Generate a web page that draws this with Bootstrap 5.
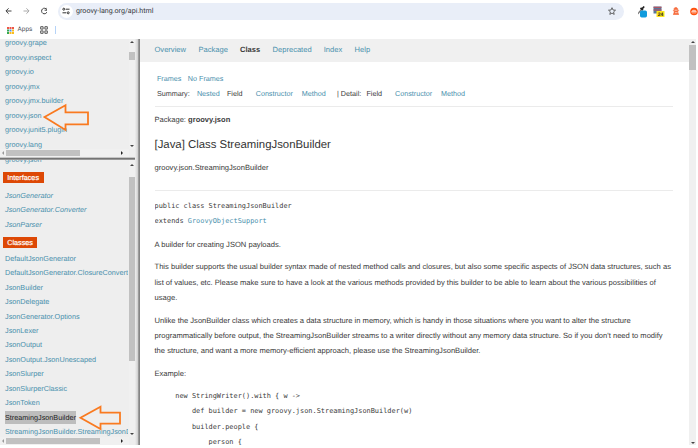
<!DOCTYPE html>
<html lang="en">
<head>
<meta charset="utf-8">
<meta name="viewport" content="width=device-width, initial-scale=1">
<title>StreamingJsonBuilder</title>
<link href="https://cdn.jsdelivr.net/npm/bootstrap@5.3.0/dist/css/bootstrap.min.css" rel="stylesheet">
<style>
body{width:698px;height:448px;font-family:"Liberation Sans",Arial,sans-serif;font-size:7.55px;line-height:15.3px;color:#3a3a3a;text-rendering:geometricPrecision}
a{color:#4a90ad;text-decoration:none}
svg{display:block;flex:none}
.toolbar{height:22px;padding-left:4px}
.omnibox{width:567px;height:17px;margin:0 14px 0 11px;background:#e9eef8;border-radius:9px;padding:0 8px 0 1.5px;font-family:Roboto,sans-serif;font-size:7.12px;color:#34373b}
.site-info{width:13px;height:13px;border-radius:50%;background:#fff;margin-right:3.5px}
.bookmarks{height:17px;padding:0 0 1px 7px;font-family:Roboto,sans-serif;font-size:6.5px;color:#50545a}
.apps-label{margin:0 8px 0 3.5px}
.bm-line{width:1px;height:8px;margin-left:7px;background:#b5d3f8}
.frames{height:406px}
.side{width:135px;background:#eee;font-size:7.26px;line-height:14.5px;white-space:nowrap}
.split{width:5px;background:linear-gradient(90deg,#eee 0,#d8d8d8 45%,#c8c8c8 60%,#858585 75%,#858585)}
.pane-a{height:118px}
.pane-b{height:285px}
.hsplit{height:3px;background:linear-gradient(#eee,#747474 50%,#aaa)}
.view{width:129px;min-height:0;padding-right:1.5px}
.view nav{overflow-x:clip}
.list-a{margin-top:-3px}
.list-b{margin-top:-7.3px}
.list-a a,.list-b a{display:block;padding-left:5px;height:14.5px;line-height:14.5px}
.list-b a{height:14.45px;line-height:14.45px}
.tag{width:max-content;background:#dd4805;color:#fff;height:11px;line-height:11.5px;padding:0 4.5px 0 4.6px;margin-left:2.6px;-webkit-text-stroke:.2px #fff}
.tag-i{margin-top:5.3px;margin-bottom:5.2px}
.tag-c{margin-top:4.9px;margin-bottom:4px}
.list-b a.picked span{background:#bdbdbd;color:#222;display:inline-block;height:13.5px;line-height:13.5px}
.vbar{width:6px;background:#f0f0f0;padding:2px 0}
.hbar{height:8px;background:#f0f0f0;width:129px;padding:0 2px}
.thumb{background:#c1c1c1}
.up,.down{width:0;height:0;border:2px solid transparent}
.up{border-bottom:2.5px solid #444;border-top:0}
.down{border-top:2.5px solid #444;border-bottom:0}
.lt,.rt{width:0;height:0;border:2px solid transparent}
.lt{border-right:2.5px solid #999;border-left:0}
.rt{border-left:2.5px solid #222;border-right:0}
.arrow{position:absolute;z-index:2}
.doc{width:549px}
.menu{height:22.5px;background:#f0f0f0;padding:2px 0 0 14.5px;display:grid;grid-template-columns:44px 41.5px 32.6px 51.1px 30.9px 30px;line-height:17px;white-space:nowrap}
.body-col{padding:0 16px 0 14.5px}
.sub{padding-left:2.4px;font-size:7.2px;white-space:nowrap}
.sub-a{margin-top:9.4px;gap:6.6px}
.sub-b{display:grid;grid-template-columns:40px 30px 28.8px 46px 35.3px 29.5px 28.5px 46px 30px}
.rule{height:1px;background:#ebebeb}
.title{font-size:11.38px;line-height:16px;color:#333}
pre{font-family:"DejaVu Sans Mono",monospace;font-size:6.92px;line-height:15.3px;color:#3a3a3a}
.para{margin:0 0 7.5px;white-space:nowrap;font-size:7.595px}
.mainbar{width:7px;background:#f0f0f0;padding:2px 0 1px}
</style>
<script src="https://cdn.jsdelivr.net/npm/bootstrap@5.3.0/dist/js/bootstrap.bundle.min.js"></script>
</head>
<body class="bg-white overflow-hidden position-relative">
<header>
  <div class="toolbar d-flex align-items-center">
    <svg width="43" height="10" viewBox="0 0 43 10" fill="none" stroke="#444" stroke-width="1"><path d="M7.5 5H2M4.6 2.3 1.9 5l2.7 2.7"/><path stroke="#aaa" d="M19.5 5H25M22.4 2.3 25.1 5l-2.7 2.7"/><path d="M42.8 3.6A2.8 2.8 0 1 0 43 6M43 1.8v2.4h-2.4"/></svg>
    <div class="omnibox d-flex align-items-center">
      <span class="site-info d-flex align-items-center justify-content-center"><svg width="8" height="8" viewBox="0 0 8 8" fill="none" stroke="#333"><path d="M3.8 2.2H7.5M.5 5.8h3.7"/><circle cx="1.8" cy="2.2" r="1"/><circle cx="6.2" cy="5.8" r="1"/></svg></span>
      <span>groovy-lang.org/api.html</span>
      <svg class="ms-auto" width="8" height="8" viewBox="0 0 8 8" fill="none" stroke="#444" stroke-width=".8"><path d="M4 .7 5 3l2.5.2-1.9 1.7.6 2.5L4 6.1 1.8 7.4l.6-2.5L.5 3.2 3 3z"/></svg>
    </div>
    <svg width="60" height="13" viewBox="3 0 60 13"><path d="m1 9 4.5-5" transform="translate(1.5 0)" stroke="#777" stroke-width="1.4"/><path d="M5.5 3 8 5.2M7 3.8l2.2-2.3" stroke="#222" stroke-width="1.7"/><rect x="5" y="5.5" width="7" height="7" rx="1.7" fill="#109bdd"/><rect x="18.5" y="1.5" width="8" height="7" fill="#58769a"/><path d="M18.5 2.3h8M18.5 5h8" stroke="#c74e55"/><rect x="21.5" y="6" width="8" height="6" rx=".5" fill="#ffe61a"/><text x="22.7" y="11" font-size="5" font-weight="bold" font-family="Liberation Sans" fill="#222">24</text><path d="M39 3.7a2 2 0 0 1 3.7 0L43 5l.7.7-1 1 .8 2.6h-5l.8-2.6-1-1 .7-.7zM38 9.5h6" fill="#f66b3d" stroke="#f66b3d" stroke-width=".6"/><path d="M39.5 5.2h3M40 7.7h2.5" stroke="#fff" stroke-width=".6"/><circle cx="59" cy="6.5" r="3.8" fill="#ff510e"/><path d="M56.5 7.3c0-3 5-3 5 0zM57 8.3h4" fill="#fff" fill-opacity=".65" stroke="#fff" stroke-opacity=".6" stroke-width=".5"/></svg>
  </div>
  <div class="bookmarks d-flex align-items-center">
    <svg width="7" height="7" viewBox="0 0 7 7"><path d="M0 0h2v2H0zM2.5 0h2v2h-2zM5 0h2v2H5z" fill="#ed5547"/><path d="M0 2.5h2v2H0z" fill="#35a853"/><path d="M2.5 2.5h2v2h-2z" fill="#4b8bf4"/><path d="M5 2.5h2v2H5zM2.5 5h2v2h-2zM5 5h2v2H5z" fill="#f9bd20"/><path d="M0 5h2v2H0z" fill="#35a853"/></svg>
    <span class="apps-label">Apps</span>
    <svg width="8" height="8" viewBox="0 0 8 8" fill="none" stroke="#555"><path d="M.7.7h2.4v2.4H.7zM4.9.7h2.4v2.4H4.9zM.7 4.9h2.4v2.4H.7zM4.9 4.9h2.4v2.4H4.9z"/></svg>
    <span class="bm-line"></span>
  </div>
</header>
<main class="frames d-flex">
  <aside class="side d-flex flex-column position-relative">
    <section class="pane-a d-flex flex-column overflow-hidden">
      <div class="d-flex overflow-hidden flex-fill">
        <div class="view overflow-hidden"><nav class="list-a">
          <a href="#">groovy.grape</a><a href="#">groovy.inspect</a><a href="#">groovy.io</a><a href="#">groovy.jmx</a><a href="#">groovy.jmx.builder</a><a href="#">groovy.json</a><a href="#">groovy.junit5.plugin</a><a href="#">groovy.lang</a>
        </nav></div>
        <div class="vbar d-flex flex-column align-items-center"><i class="up"></i><b class="thumb w-100" style="height:8px;margin-top:8.5px"></b><i class="down mt-auto"></i></div>
      </div>
      <div class="hbar d-flex align-items-center"><i class="lt"></i><b class="thumb" style="width:74px;height:6px;margin-left:2px"></b><i class="rt ms-auto me-1"></i></div>
    </section>
    <div class="hsplit"></div>
    <section class="pane-b d-flex flex-column overflow-hidden">
      <div class="d-flex overflow-hidden flex-fill">
        <div class="view overflow-hidden"><nav class="list-b">
          <a href="#">groovy.json</a>
          <div class="tag tag-i">Interfaces</div>
          <a href="#" class="fst-italic">JsonGenerator</a><a href="#" class="fst-italic">JsonGenerator.Converter</a><a href="#" class="fst-italic">JsonParser</a>
          <div class="tag tag-c">Classes</div>
          <a href="#">DefaultJsonGenerator</a><a href="#">DefaultJsonGenerator.ClosureConverter</a><a href="#">JsonBuilder</a><a href="#">JsonDelegate</a><a href="#">JsonGenerator.Options</a><a href="#">JsonLexer</a><a href="#">JsonOutput</a><a href="#">JsonOutput.JsonUnescaped</a><a href="#">JsonSlurper</a><a href="#">JsonSlurperClassic</a><a href="#">JsonToken</a><a href="#" class="picked"><span>StreamingJsonBuilder</span></a><a href="#">StreamingJsonBuilder.StreamingJsonDelegate</a>
        </nav></div>
        <div class="vbar d-flex flex-column align-items-center" style="padding-top:4px"><i class="up"></i><b class="thumb w-100" style="height:184px;margin-top:10.5px"></b><i class="down mt-auto"></i></div>
      </div>
      <div class="hbar d-flex align-items-center"><i class="lt"></i><b class="thumb" style="width:94px;height:6px;margin-left:2px"></b><i class="rt ms-auto me-1"></i></div>
    </section>
    <svg class="arrow" style="left:42px;top:62px" width="50" height="32" viewBox="0 0 50 32" fill="none" stroke="#f97a20" stroke-width="1.8"><path d="M2.5 16 23.5 4.2v7.1H46v12H23.5V29z"/></svg>
    <svg class="arrow" style="left:78px;top:365px" width="46" height="28" viewBox="0 0 46 28" fill="none" stroke="#f97a20" stroke-width="1.8"><path d="M2.5 13.7 22.5 2.7v6H42v11H22.5V25z"/></svg>
  </aside>
  <div class="split"></div>
  <article class="doc overflow-hidden">
    <nav class="menu"><a href="#">Overview</a><a href="#">Package</a><b>Class</b><a href="#">Deprecated</a><a href="#">Index</a><a href="#">Help</a></nav>
    <div class="body-col">
      <div class="sub sub-a d-flex"><a href="#">Frames</a><a href="#">No Frames</a></div>
      <div class="sub sub-b"><span>Summary:</span><a href="#">Nested</a><span>Field</span><a href="#">Constructor</a><a href="#">Method</a><span>| Detail:</span><span>Field</span><a href="#">Constructor</a><a href="#">Method</a></div>
      <div class="rule" style="margin-top:5px"></div>
      <div style="margin-top:4.8px">Package: <b>groovy.json</b></div>
      <h1 class="title fw-normal" style="margin:9px 0 7.8px">[Java] Class StreamingJsonBuilder</h1>
      <div>groovy.json.StreamingJsonBuilder</div>
      <div class="rule" style="margin:14.3px 0 7.7px"></div>
      <pre style="margin:0 0 7.3px">public class StreamingJsonBuilder
extends <a href="#">GroovyObjectSupport</a></pre>
      <p class="para">A builder for creating JSON payloads.</p>
      <p class="para">This builder supports the usual builder syntax made of nested method calls and closures, but also some specific aspects of JSON data structures, such as<br>list of values, etc. Please make sure to have a look at the various methods provided by this builder to be able to learn about the various possibilities of<br>usage.</p>
      <p class="para">Unlike the JsonBuilder class which creates a data structure in memory, which is handy in those situations where you want to alter the structure<br>programmatically before output, the StreamingJsonBuilder streams to a writer directly without any memory data structure. So if you don't need to modify<br>the structure, and want a more memory-efficient approach, please use the StreamingJsonBuilder.</p>
      <p class="para">Example:</p>
      <pre class="m-0 overflow-hidden">     new StringWriter().with { w -&gt;
         def builder = new groovy.json.StreamingJsonBuilder(w)
         builder.people {
             person {</pre>
    </div>
  </article>
  <div class="mainbar d-flex flex-column align-items-center"><i class="up"></i><b class="thumb w-100" style="height:25px;margin-top:1.5px"></b><i class="down mt-auto"></i></div>
</main>
</body>
</html>
